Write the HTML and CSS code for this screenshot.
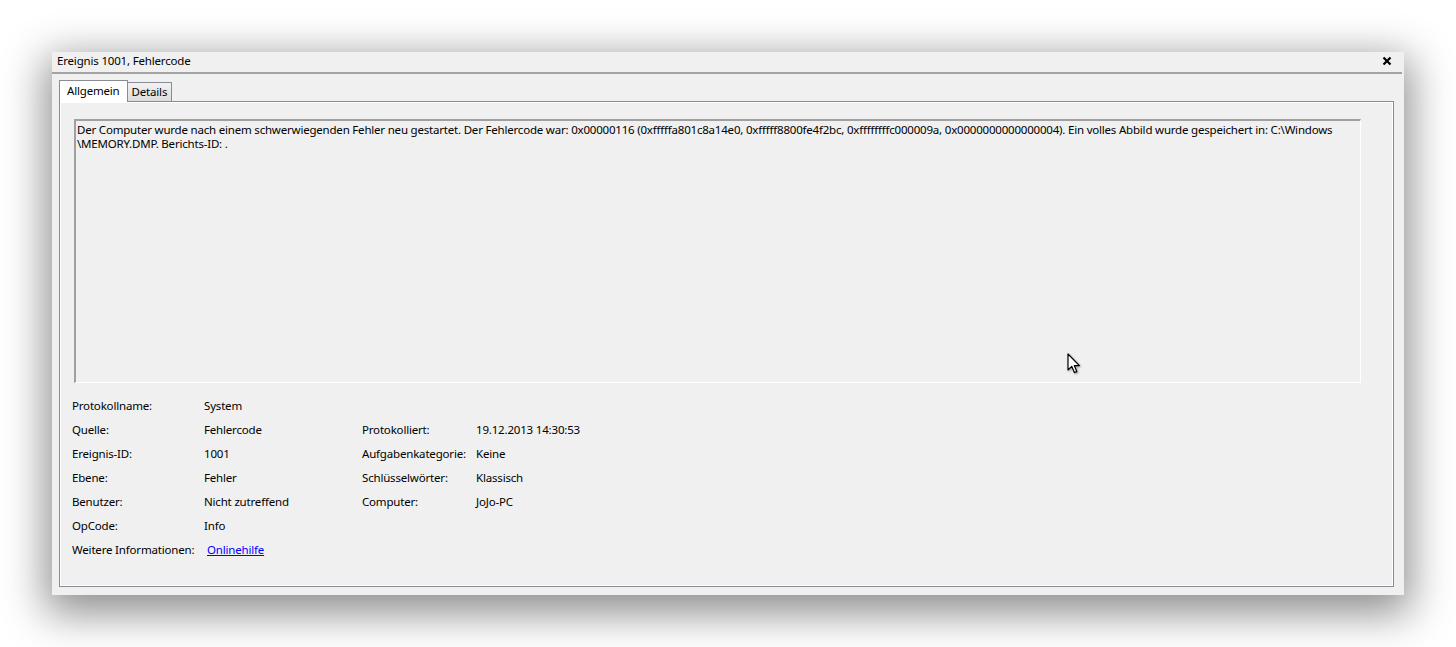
FILE: index.html
```html
<!DOCTYPE html>
<html lang="de">
<head>
	<meta charset="UTF-8">
	<title>Ereignis 1001, Fehlercode</title>
	<link rel="stylesheet" href="styles.css">
</head>
<body>
	<!-- Fenster -->
	<div class="window">
		<div class="titlebar">
			<span class="title">Ereignis 1001, Fehlercode</span>
			<svg class="close" width="10" height="10" viewBox="0 0 10 10">
				<path d="M1.5 1.5 L8.5 8.5 M8.5 1.5 L1.5 8.5" stroke="#000" stroke-width="2.2" fill="none"/>
			</svg>
		</div>
		<div class="content">
			<ul class="tabs">
				<li class="tab active">Allgemein</li>
				<li class="tab">Details</li>
			</ul>
			<div class="panel">
				<div class="message">Der Computer wurde nach einem schwerwiegenden Fehler neu gestartet. Der Fehlercode war: 0x00000116 (0xfffffa801c8a14e0, 0xfffff8800fe4f2bc, 0xffffffffc000009a, 0x0000000000000004). Ein volles Abbild wurde gespeichert in: C:\Windows \MEMORY.DMP. Berichts-ID: .</div>
				<div class="props">
					<span>Protokollname:</span><span>System</span><span></span><span></span>
					<span>Quelle:</span><span>Fehlercode</span><span>Protokolliert:</span><span>19.12.2013 14:30:53</span>
					<span>Ereignis-ID:</span><span>1001</span><span>Aufgabenkategorie:</span><span>Keine</span>
					<span>Ebene:</span><span>Fehler</span><span>Schlüsselwörter:</span><span>Klassisch</span>
					<span>Benutzer:</span><span>Nicht zutreffend</span><span>Computer:</span><span>JoJo-PC</span>
					<span>OpCode:</span><span>Info</span><span></span><span></span>
					<span>Weitere Informationen:</span><span><a class="link" href="#">Onlinehilfe</a></span><span></span><span></span>
				</div>
			</div>
		</div>
		<!-- Mauszeiger -->
		<svg class="cursor" width="14" height="22" viewBox="0 0 14 22">
			<path d="M1 1 L1 17 L4.8 13.4 L7.4 19.6 L9.8 18.6 L7.3 12.6 L12.4 12.6 Z" fill="#fff" stroke="#000" stroke-width="1.2" stroke-linejoin="round"/>
		</svg>
	</div>
</body>
</html>
```

FILE: styles.css
```css
*{
	margin:0;
	padding:0;
	box-sizing:border-box;
}
ul{
	list-style:none;
}
html,body{
	min-height:647px;
}
body{
	background:#fff;
	font-family:"Noto Sans","Open Sans",sans-serif;
	font-size:11.5px;
	letter-spacing:-0.18px;
	color:#000;
	padding:52px 0 52px 52px;
}
.window{
	position:relative;
	width:1352px;
	height:543px;
	background:#f0f0f0;
	box-shadow:0 12px 40px 6px rgba(0,0,0,0.45);
}
.titlebar{
	height:22px;
	display:flex;
	align-items:center;
	justify-content:space-between;
	padding:0 10px 3px 5px;
	border-bottom:2px solid #a3a3a3;
	margin-right:2px;
}
.close{
	display:block;
}
.content{
	padding:6px 10px 9px 7px;
}
.tabs{
	display:flex;
	align-items:flex-end;
	height:21px;
	position:relative;
	z-index:1;
}
.tab{
	height:19px;
	line-height:17px;
	padding:0 4px;
	border:1px solid #898c95;
	border-bottom:none;
	background:linear-gradient(#f2f2f2,#dcdcdc);
	margin-left:-1px;
}
.tab.active{
	height:22px;
	line-height:19px;
	padding:0 7px;
	background:#fff;
	margin-left:0;
	margin-bottom:-1px;
}
.panel{
	height:486px;
	border:1px solid #898c95;
	box-shadow:inset 1px 1px 0 #fff,inset -1px -1px 0 #fff;
	padding:17px 32px 0 14px;
}
.message{
	height:264px;
	border-top:2px solid #a0a0a0;
	border-left:2px solid #a0a0a0;
	border-right:1px solid #fff;
	border-bottom:1px solid #fff;
	padding:2px 0 0 1px;
	line-height:14px;
	letter-spacing:-0.2px;
}
.props{
	display:grid;
	grid-template-columns:132px 158px 114px auto;
	grid-auto-rows:24px;
	align-items:center;
	padding:10px 0 0 0;
	margin-left:-2px;
}
.link{
	color:#0000ff;
	margin-left:3px;
}
.cursor{
	position:absolute;
	left:1015px;
	top:301px;
	filter:drop-shadow(1px 1px 1px rgba(0,0,0,0.35));
}
```
